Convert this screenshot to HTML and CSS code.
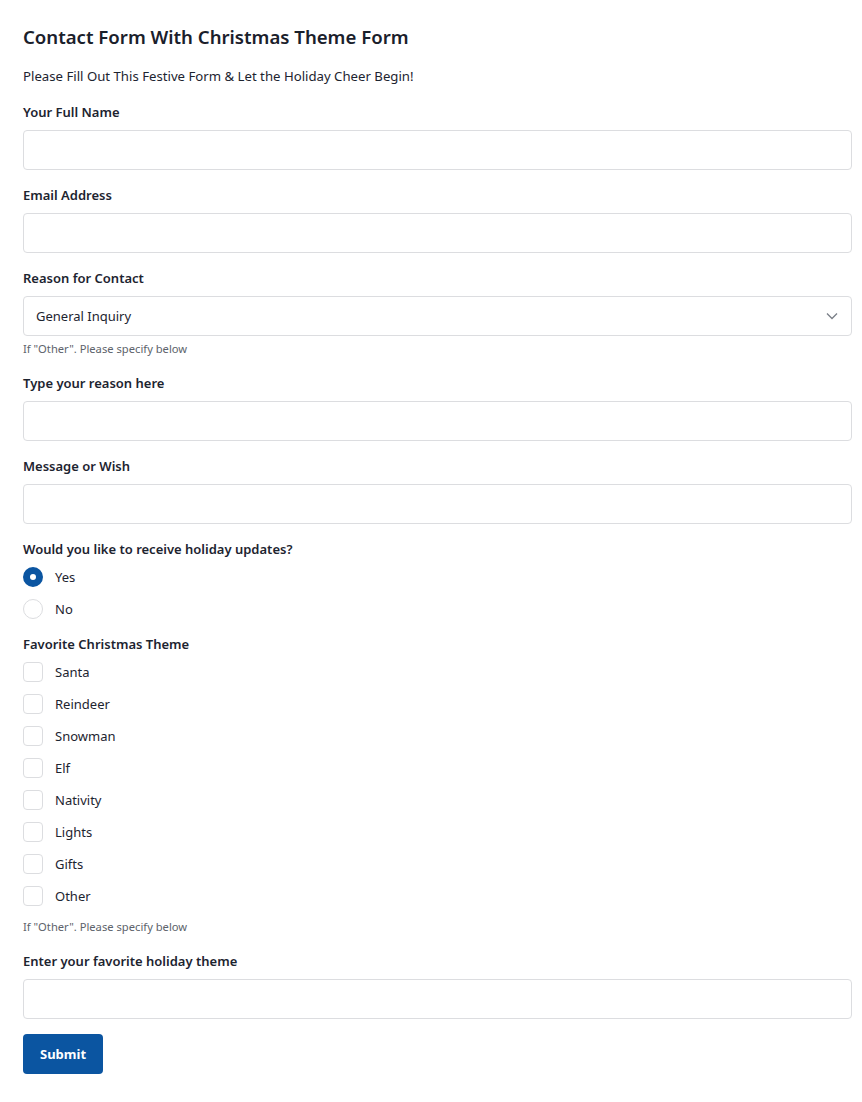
FILE: index.html
```html
<!DOCTYPE html>
<html lang="en">
<head>
    <meta charset="UTF-8">
    <meta name="viewport" content="width=device-width, initial-scale=1.0">
    <title>Contact Form With Christmas Theme Form</title>
    <link rel="stylesheet" href="styles.css">
</head>
<body>
    <form class="xmas-form" onsubmit="return false;">
        <h1 class="form-title">Contact Form With Christmas Theme Form</h1>
        <p class="form-intro">Please Fill Out This Festive Form &amp; Let the Holiday Cheer Begin!</p>

        <div class="field">
            <label for="fullName">Your Full Name</label>
            <input type="text" id="fullName">
        </div>
        <div class="field">
            <label for="email">Email Address</label>
            <input type="email" id="email">
        </div>
        <div class="field">
            <label for="reason">Reason for Contact</label>
            <div class="select-wrap">
                <select id="reason">
                    <option>General Inquiry</option>
                    <option>Feedback</option>
                    <option>Other</option>
                </select>
                <svg class="select-arrow" width="12" height="8" viewBox="0 0 12 8"><path d="M1 1.5l5 5 5-5" fill="none" stroke="#7a7f87" stroke-width="1.3"/></svg>
            </div>
            <small class="help">If "Other". Please specify below</small>
        </div>
        <div class="field">
            <label for="reasonText">Type your reason here</label>
            <input type="text" id="reasonText">
        </div>
        <div class="field">
            <label for="message">Message or Wish</label>
            <input type="text" id="message">
        </div>

        <div class="field">
            <span class="group-label">Would you like to receive holiday updates?</span>
            <div class="options">
                <label class="option"><input type="radio" name="updates" checked><span class="radio"></span>Yes</label>
                <label class="option"><input type="radio" name="updates"><span class="radio"></span>No</label>
            </div>
        </div>

        <div class="field field-themes">
            <span class="group-label">Favorite Christmas Theme</span>
            <div class="options">
                <label class="option"><input type="checkbox"><span class="check"></span>Santa</label>
                <label class="option"><input type="checkbox"><span class="check"></span>Reindeer</label>
                <label class="option"><input type="checkbox"><span class="check"></span>Snowman</label>
                <label class="option"><input type="checkbox"><span class="check"></span>Elf</label>
                <label class="option"><input type="checkbox"><span class="check"></span>Nativity</label>
                <label class="option"><input type="checkbox"><span class="check"></span>Lights</label>
                <label class="option"><input type="checkbox"><span class="check"></span>Gifts</label>
                <label class="option"><input type="checkbox"><span class="check"></span>Other</label>
            </div>
            <small class="help help-gap">If "Other". Please specify below</small>
        </div>
        <div class="field">
            <label for="favTheme">Enter your favorite holiday theme</label>
            <input type="text" id="favTheme">
        </div>

        <button type="submit" class="submit-btn">Submit</button>
    </form>
</body>
</html>
```

FILE: styles.css
```css
body {
    font-family: "Noto Sans", "Open Sans", Arial, sans-serif;
    color: #1d2430;
    background: #fff;
    margin: 0;
    padding: 23px 10px 20px 23px;
}
.xmas-form {
    max-width: 829px;
}
.form-title {
    font-size: 18.6px;
    font-weight: 600;
    line-height: 28px;
    margin: 0 0 15px;
    color: #1a202b;
}
.form-intro {
    font-size: 13.2px;
    line-height: 20px;
    margin: 0 0 16px;
}
.field {
    display: flex;
    flex-direction: column;
    margin-bottom: 15px;
}
.field-themes {
    margin-top: 1px;
}
.field > label, .group-label {
    font-size: 13px;
    font-weight: 600;
    line-height: 20px;
    margin-bottom: 8px;
}
.field input[type="text"], .field input[type="email"], .field select {
    box-sizing: border-box;
    width: 100%;
    height: 40px;
    border: 1px solid #dcdde0;
    border-radius: 4px;
    padding: 0 12px;
    font-family: inherit;
    font-size: 13px;
    color: #1d2430;
    background: #fff;
    outline: none;
}
.select-wrap {
    position: relative;
}
.field select {
    appearance: none;
    -webkit-appearance: none;
}
.select-arrow {
    position: absolute;
    right: 14px;
    top: 16px;
    pointer-events: none;
}
.help {
    font-size: 11.2px;
    line-height: 16px;
    color: #5d636b;
    margin-top: 5px;
    margin-bottom: 1px;
}
.help-gap {
    margin-top: 13px;
    margin-bottom: 1px;
}
.options {
    display: flex;
    flex-direction: column;
    gap: 12px;
}
.option {
    display: flex;
    align-items: center;
    gap: 12px;
    font-size: 13px;
    line-height: 20px;
    cursor: pointer;
}
.option input {
    display: none;
}
.radio, .check {
    box-sizing: border-box;
    width: 20px;
    height: 20px;
    border: 1px solid #dcdde0;
    background: #fff;
    flex-shrink: 0;
}
.radio {
    border-radius: 50%;
}
.check {
    border-radius: 4px;
}
.option input:checked + .radio {
    border: 7px solid #0b55a1;
}
.submit-btn {
    background-color: #0b55a1;
    color: #fff;
    border: none;
    border-radius: 4px;
    height: 40px;
    padding: 0 17px;
    font-family: inherit;
    font-size: 13px;
    font-weight: 700;
    cursor: pointer;
}
.submit-btn:hover {
    background-color: #09478a;
}
```
